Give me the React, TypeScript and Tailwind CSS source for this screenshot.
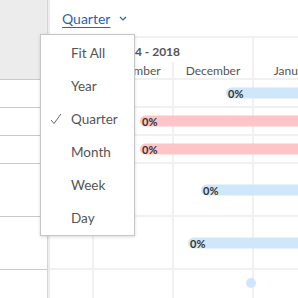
import React from "react";

type Bar = { left: number; color: "blue" | "red" };
type Row = { height: number; bar?: Bar; dot?: number };

const rows: Row[] = [
  { height: 28, bar: { left: 176, color: "blue" } },
  { height: 28, bar: { left: 90, color: "red" } },
  { height: 28, bar: { left: 90, color: "red" } },
  { height: 53, bar: { left: 151, color: "blue" } },
  { height: 53, bar: { left: 138, color: "blue" } },
  { height: 40, dot: 196 },
];

const scales = ["Fit All", "Year", "Quarter", "Month", "Week", "Day"];

function GridLines() {
  return (
    <div className="absolute inset-0 grid grid-cols-[44px_80px_80px_80px] pointer-events-none">
      <div className="border-r-2 border-[#f1f1f1]" />
      <div className="border-r-2 border-[#f1f1f1]" />
      <div className="border-r-2 border-[#f1f1f1]" />
      <div />
    </div>
  );
}

function TaskBar({ bar }: { bar: Bar }) {
  return (
    <div
      className={
        "absolute top-1/2 -translate-y-1/2 right-0 h-[11px] rounded-l-full flex items-center " +
        (bar.color === "red" ? "bg-[#fdc5c5]" : "bg-[#d0e7fa]")
      }
      style={{ left: bar.left }}
    >
      <span className="pl-[2px] text-[11px] font-bold text-[#333] leading-none">0%</span>
    </div>
  );
}

export default function App() {
  return (
    <div
      className="relative w-[298px] h-[298px] overflow-hidden bg-white flex"
      style={{ fontFamily: "Lato, 'Open Sans', sans-serif" }}
    >
      {/* task list */}
      <div className="w-[47px] shrink-0 flex flex-col">
        <div className="h-[80px] shrink-0 bg-[#ececec] border-b border-[#c9c9c9]" />
        {rows.map((r, i) => (
          <div
            key={i}
            className={"shrink-0 " + (i === rows.length - 1 ? "" : "border-b border-[#c9c9c9]")}
            style={{ height: r.height }}
          />
        ))}
      </div>

      {/* splitter */}
      <div className="w-[3px] shrink-0 border-l border-[#d4d4d4] bg-[#ececec]" />

      {/* timeline */}
      <div className="flex-1 flex flex-col min-w-0">
        <div className="h-[38px] shrink-0 flex items-center pl-[12px] gap-[9px] border-b-2 border-[#f1f1f1]">
          <span className="text-[14px] text-[#2c64b0] underline underline-offset-[3px] decoration-1">
            Quarter
          </span>
          <svg width="8" height="5" viewBox="0 0 8 5" className="mt-[1px]">
            <polyline points="1,1 4,4 7,1" fill="none" stroke="#2c64b0" strokeWidth="1.2" />
          </svg>
        </div>

        <div className="grid grid-cols-[204px_80px] h-[24px] shrink-0 text-[12px] font-bold text-[#555]">
          <div className="flex items-center pt-[4px] pl-[40px] border-r-2 border-[#f1f1f1] whitespace-nowrap">
            Quarter 4 - 2018
          </div>
          <div />
        </div>

        <div className="grid grid-cols-[44px_80px_80px_80px] h-[18px] shrink-0 border-b-2 border-[#f1f1f1] text-[12px] text-[#555]">
          <div className="flex items-center justify-center border-r-2 border-[#f1f1f1]">October</div>
          <div className="flex items-center justify-center border-r-2 border-[#f1f1f1]">November</div>
          <div className="flex items-center justify-center border-r-2 border-[#f1f1f1]">December</div>
          <div className="flex items-center justify-center whitespace-nowrap">January</div>
        </div>

        <div className="relative flex-1 shrink-0">
          <GridLines />
          {rows.map((r, i) => (
            <div
              key={i}
              className={"relative shrink-0 " + (i === rows.length - 1 ? "" : "border-b-2 border-[#f1f1f1]")}
              style={{ height: r.height }}
            >
              {r.bar && <TaskBar bar={r.bar} />}
              {r.dot !== undefined && (
                <div
                  className="absolute top-[8px] w-[10px] h-[10px] rounded-full bg-[#d0e7fa]"
                  style={{ left: r.dot }}
                />
              )}
            </div>
          ))}
        </div>
      </div>

      {/* zoom menu */}
      <div className="absolute left-[40px] top-[34px] w-[95px] bg-white border border-[#c6c6c6] shadow-[0_1px_3px_rgba(0,0,0,0.15)] pt-[2px] text-[13.5px] text-[#555]">
        {scales.map((s) => (
          <div key={s} className="relative h-[33px] flex items-center pl-[30px]">
            {s === "Quarter" && (
              <svg width="12" height="12" viewBox="0 0 12 12" className="absolute left-[9px] top-[10px]">
                <polyline points="1,7 4,10.5 11,1" fill="none" stroke="#666" strokeWidth="1" />
              </svg>
            )}
            {s}
          </div>
        ))}
      </div>
    </div>
  );
}
